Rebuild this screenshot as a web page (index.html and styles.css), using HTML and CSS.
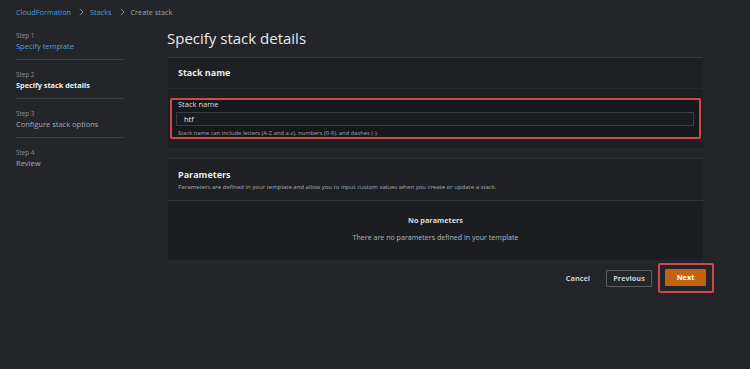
FILE: index.html
```html
<!DOCTYPE html>
<html lang="en">
<head>
<meta charset="utf-8">
<title>Create stack</title>
<link rel="stylesheet" href="styles.css">
</head>
<body>
<nav class="breadcrumb">
  <a class="crumb-link" href="#">CloudFormation</a>
  <svg class="chev" viewBox="0 0 5 8" width="5" height="8"><path d="M1 0.8 L4 4 L1 7.2" fill="none" stroke="#8d9196" stroke-width="1"/></svg>
  <a class="crumb-link" href="#">Stacks</a>
  <svg class="chev" viewBox="0 0 5 8" width="5" height="8"><path d="M1 0.8 L4 4 L1 7.2" fill="none" stroke="#8d9196" stroke-width="1"/></svg>
  <span class="crumb-current">Create stack</span>
</nav>
<div class="layout">
  <aside class="steps">
    <div class="step">
      <div class="step-num">Step 1</div>
      <a class="step-title link" href="#">Specify template</a>
    </div>
    <div class="step">
      <div class="step-num">Step 2</div>
      <div class="step-title active">Specify stack details</div>
    </div>
    <div class="step">
      <div class="step-num">Step 3</div>
      <div class="step-title">Configure stack options</div>
    </div>
    <div class="step last">
      <div class="step-num">Step 4</div>
      <div class="step-title">Review</div>
    </div>
  </aside>
  <main class="main">
    <h1 class="page-title">Specify stack details</h1>
    <section class="panel">
      <div class="panel-header">
        <h2 class="panel-title">Stack name</h2>
      </div>
      <div class="panel-body">
        <div class="field highlight">
          <label class="field-label" for="sn">Stack name</label>
          <div class="input" id="sn">htf</div>
          <div class="field-hint">Stack name can include letters (A-Z and a-z), numbers (0-9), and dashes (-).</div>
        </div>
      </div>
    </section>
    <section class="panel params">
      <div class="panel-header params-header">
        <h2 class="panel-title">Parameters</h2>
        <p class="panel-desc">Parameters are defined in your template and allow you to input custom values when you create or update a stack.</p>
      </div>
      <div class="empty">
        <div class="empty-title">No parameters</div>
        <div class="empty-text">There are no parameters defined in your template</div>
      </div>
    </section>
    <div class="actions">
      <button class="btn btn-link">Cancel</button>
      <button class="btn btn-normal">Previous</button>
      <span class="btn-highlight"><button class="btn btn-primary">Next</button></span>
    </div>
  </main>
</div>
</body>
</html>
```

FILE: styles.css
```css
html, body {
  margin: 0;
  padding: 0;
}
body {
  width: 750px;
  height: 369px;
  overflow: hidden;
  background: #232528;
  font-family: "Open Sans", "Noto Sans", sans-serif;
  color: #d1d5db;
}
a { text-decoration: none; }

.breadcrumb {
  display: flex;
  align-items: center;
  padding: 6px 16px 0;
  height: 12px;
  font-size: 7.3px;
  line-height: 12px;
}
.crumb-link { color: #4f9fdc; }
.crumb-current { color: #9ea2a7; }
.chev { margin: 0 6px 0 8px; }

.layout {
  display: flex;
}

.steps {
  width: 108px;
  margin-left: 16px;
  padding-top: 3px;
  flex: none;
}
.step {
  padding: 9px 0 7px;
  border-bottom: 1px solid #3a3d41;
  height: 22px;
}
.step.last { border-bottom: none; }
.step-num {
  font-size: 6.3px;
  line-height: 11px;
  color: #8d9196;
}
.step-title {
  display: block;
  font-size: 7.5px;
  line-height: 11px;
  color: #a7abb0;
  white-space: nowrap;
}
.step-title.link { color: #4f9fdc; }
.step-title.active { color: #eef0f2; font-weight: 700; font-size: 7.3px; }

.main {
  margin-left: 43px;
  width: 536px;
  flex: none;
}
.page-title {
  margin: 10px 0 9px;
  font-size: 15px;
  line-height: 20px;
  font-weight: 400;
  color: #e9ebed;
}

.panel {
  margin-left: 1px;
  background: #1d1f22;
  border-top: 1px solid #36393d;
}
.panel-header {
  padding: 8px 10px 8px;
  border-bottom: 1px solid #26282c;
  background: #1e2023;
}
.panel-title {
  margin: 0;
  font-size: 9px;
  line-height: 14px;
  font-weight: 700;
  color: #e9ebed;
}
.panel-body {
  padding: 9px 2px 9px;
}

.field.highlight {
  border: 2px solid #d4464d;
  border-radius: 2px;
  background: #17181b;
}
.field-label {
  display: block;
  padding-left: 6px;
  font-size: 7.5px;
  line-height: 8px;
  color: #dcdfe2;
}
.input {
  margin: 4px 5px 0 4px;
  height: 12px;
  border: 1px solid #3a3d41;
  background: #1a1b1e;
  padding-left: 7px;
  font-size: 7.5px;
  line-height: 12px;
  color: #eceef0;
}
.field-hint {
  margin-top: 3px;
  padding-left: 6px;
  font-size: 5.8px;
  line-height: 8px;
  color: #a2a6ab;
  white-space: nowrap;
}

.params {
  margin-top: 10px;
  border-top: 1px solid #2e3135;
}
.params-header {
  padding: 9px 10px 8px;
  border-bottom: 1px solid #2f3236;
}
.panel-desc {
  margin: 1px 0 0;
  font-size: 6px;
  line-height: 9px;
  color: #a9adb2;
  white-space: nowrap;
}
.empty {
  background: #1b1d20;
  height: 59px;
  padding-top: 14px;
  box-sizing: border-box;
  text-align: center;
}
.empty-title {
  font-size: 7.3px;
  line-height: 10px;
  font-weight: 700;
  color: #d6d9dc;
}
.empty-text {
  margin-top: 7px;
  font-size: 7.1px;
  line-height: 10px;
  color: #b4b8bc;
}

.actions {
  display: flex;
  justify-content: flex-end;
  align-items: center;
  margin-top: 3px;
  margin-right: -11px;
}
.btn {
  font-family: "Open Sans", "Noto Sans", sans-serif;
  font-size: 7.3px;
  font-weight: 700;
  height: 17px;
  line-height: 15px;
  border-radius: 1px;
  padding: 0;
  cursor: pointer;
}
.btn-link {
  background: none;
  border: none;
  color: #c9cdd1;
  padding: 0 8px;
  margin-right: 8px;
}
.btn-normal {
  background: transparent;
  border: 1px solid #5a5f66;
  color: #c9cdd1;
  width: 46px;
  margin-right: 6px;
}
.btn-highlight {
  display: flex;
  border: 2px solid #d4464d;
  border-radius: 2px;
  padding: 4px 6px 5px 5px;
}
.btn-primary {
  width: 41px;
  background: #c5620f;
  border: 1px solid #c5620f;
  color: #ffffff;
}
```
